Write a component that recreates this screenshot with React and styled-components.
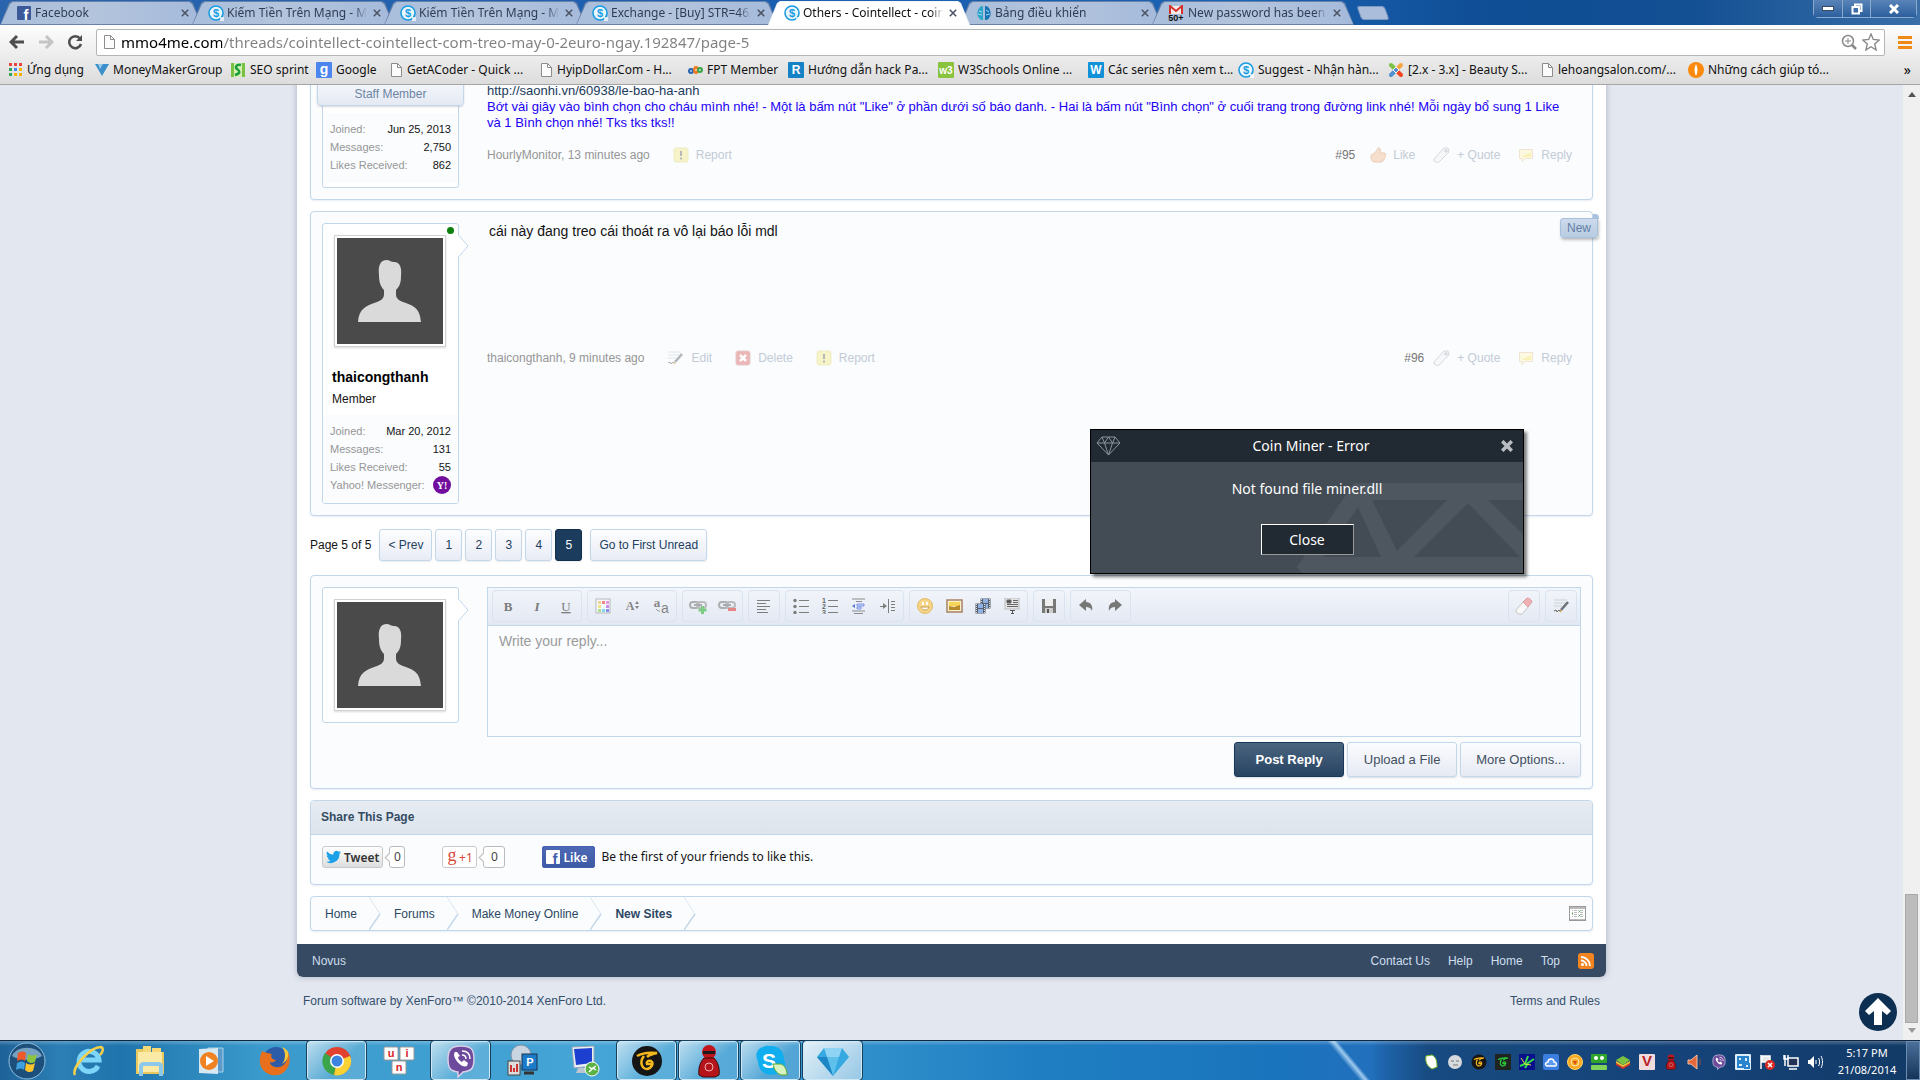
import React from 'react';
import styled, { createGlobalStyle, css } from 'styled-components';

const GlobalStyle = createGlobalStyle`
  * {
    box-sizing: border-box;
  }

  body {
    margin: 0;
    font-family: "Liberation Sans", Arial, sans-serif;
    font-size: 12px;
    line-height: 16px;
    color: #141414;
  }

  a {
    color: inherit;
    text-decoration: none;
  }

  button, input, textarea {
    font-family: inherit;
    margin: 0;
  }

  svg {
    display: block;
    flex-shrink: 0;
  }
`;

const uiFont = '"Noto Sans", "Open Sans", sans-serif';
const blue = '#c3d7ea';

const Desktop = styled.div`
  display: flex;
  flex-direction: column;
  height: 100vh;
  min-height: 600px;
  overflow: hidden;
  position: relative;
`;

/* ---------- browser chrome ---------- */

const TabStrip = styled.div`
  display: flex;
  height: 25px;
  padding-top: 1px;
  background: linear-gradient(90deg, #2a64ad 0, #1b5fb0 40%, #1a62b3 65%, #0f4d94 78%, #124f93 88%, #3a6fa8 100%);
  font-family: ${uiFont};
`;

const Tab = styled.div`
  position: relative;
  z-index: ${props => (props.$active ? 2 : 1)};
  display: flex;
  align-items: center;
  gap: 3px;
  width: 202px;
  margin-right: -10px;
  padding: 0 10px 0 16px;
  isolation: isolate;
  font-size: 12px;
  color: ${props => (props.$active ? '#111' : '#2f3d54')};

  &::before,
  &::after {
    content: '';
    position: absolute;
    z-index: -1;
    inset: 0;
    background: ${props => (props.$active ? '#f4f6f9' : '#6781a8')};
    clip-path: polygon(0 100%, 9px 2px, 12px 0, calc(100% - 12px) 0, calc(100% - 9px) 2px, 100% 100%);
  }

  &::after {
    inset: 1px 1px ${props => (props.$active ? '0' : '1px')};
    background: ${props => (props.$active ? '#fff' : 'linear-gradient(90deg, #a9bedb, #b3c4dc 45%, #a5badb)')};
  }
`;

const TabTitle = styled.a`
  flex: 1;
  min-width: 0;
  overflow: hidden;
  white-space: nowrap;
  mask-image: linear-gradient(90deg, #000 calc(100% - 12px), transparent);
`;

const TabClose = styled.button`
  display: flex;
  padding: 3px;
  border: 0;
  background: none;
  color: #4c5566;
`;

const NewTab = styled.button`
  width: 28px;
  height: 14px;
  margin: 5px 0 0 15px;
  border: 1px solid #7f9ac2;
  border-radius: 3px;
  background: #aabddb;
  transform: skewX(20deg);
`;

const WindowControls = styled.div`
  display: flex;
  height: 18px;
  margin: -1px 3px 0 auto;
  border: 1px solid #8ba9cd;
  border-top: 0;
  border-radius: 0 0 5px 5px;
`;

const WindowButton = styled.button`
  display: flex;
  align-items: center;
  justify-content: center;
  width: ${props => (props.$wide ? 46 : 28)}px;
  border: 0;
  border-left: ${props => (props.$first ? '0' : '1px solid #8ba9cd')};
  background: linear-gradient(#5a84b8, #2b5f9e);
  padding: 0;
`;

const NavBar = styled.div`
  display: flex;
  align-items: center;
  gap: 13px;
  height: 34px;
  padding: 0 8px 0 9px;
  background: linear-gradient(#fdfdfd, #ebebeb);
`;

const ToolButton = styled.button`
  display: flex;
  padding: 0;
  border: 0;
  background: none;
`;

const AddressBox = styled.div`
  flex: 1;
  display: flex;
  align-items: center;
  gap: 5px;
  height: 27px;
  padding: 0 4px 0 6px;
  border: 1px solid #b5b5b5;
  border-radius: 2px;
  background: #fff;
`;

const AddressInput = styled.input`
  flex: 1;
  border: 0;
  outline: 0;
  padding: 0;
  font-family: ${uiFont};
  font-size: 15px;
  color: #808080;
  background: linear-gradient(90deg, #000 101px, #808080 101px);
  background-clip: text;
  -webkit-text-fill-color: transparent;
`;

const BookmarkBar = styled.div`
  display: flex;
  align-items: center;
  height: 26px;
  padding: 0 9px 4px 8px;
  border-bottom: 1px solid #a6a6a6;
  background: linear-gradient(#ebebeb, #dcdcdc);
  font-family: ${uiFont};
  font-size: 12px;
`;

const Bookmark = styled.a`
  display: flex;
  align-items: center;
  gap: 4px;
  width: ${props => props.$width}px;
  white-space: nowrap;
  color: #111;
`;

const More = styled.button`
  margin-left: auto;
  padding: 0;
  border: 0;
  background: none;
  font-size: 14px;
`;

/* ---------- page ---------- */

const Viewport = styled.div`
  flex: 1;
  display: flex;
  min-height: 0;
`;

const Page = styled.main`
  flex: 1;
  position: relative;
  overflow: hidden;
  background: #e3e7f0;
`;

const Container = styled.div`
  max-width: 1309px;
  margin: -15px auto 0;
  border-radius: 0 0 6px 6px;
  background: #fff;
  box-shadow: 0 0 6px rgba(60, 80, 110, 0.35);
`;

const Content = styled.div`
  display: flex;
  flex-direction: column;
  gap: 11px;
  padding: 0 13px 13px;
`;

const Panel = styled.section`
  border: 1px solid ${blue};
  border-radius: 4px;
  background: #fafcfe;
  box-shadow: 0 1px 2px rgba(100, 130, 170, 0.15);
`;

const Post = styled(Panel)`
  display: flex;
  align-items: ${props => (props.$top ? 'flex-start' : 'stretch')};
  gap: 28px;
  padding: 11px;
  position: relative;
`;

const UserCard = styled.aside`
  position: relative;
  width: 137px;
  flex-shrink: 0;
  border: 1px solid ${blue};
  border-radius: 3px;
  background: #fff;
`;

const CardArrow = styled.svg`
  position: absolute;
  top: 11px;
  right: -11px;
`;

const OnlineDot = styled.span`
  position: absolute;
  top: 3px;
  right: 4px;
  width: 7px;
  height: 7px;
  border-radius: 50%;
  background: #0b800b;
`;

const AvatarFrame = styled.a`
  display: block;
  width: 112px;
  margin: 11px;
  padding: 2px;
  border: 1px solid #d2d2d6;
  background: #fff;
  box-shadow: 0 1px 2px rgba(0, 0, 0, 0.15);
`;

const UserText = styled.div`
  padding: 10px 9px 8px;
`;

const UserName = styled.h3`
  margin: 0 0 5px;
  font-size: 14px;
  line-height: 18px;
  color: #000;
`;

const UserStats = styled.dl`
  margin: 0;
  padding: 7px 7px 9px;
  background: #fafcfe;
  font-size: 11px;
`;

const Stat = styled.div`
  display: flex;
  justify-content: space-between;
  align-items: center;
  height: 18px;

  dt {
    color: #969696;
  }

  dd {
    margin: 0;
  }
`;

const StaffBadge = styled.div`
  height: 23px;
  margin: 0 -6px 7px;
  border: 1px solid ${blue};
  border-radius: 0 0 4px 4px;
  background: linear-gradient(#f3f6fb, #e4e9f3);
  box-shadow: 0 1px 2px rgba(0, 0, 0, 0.15);
  text-align: center;
  line-height: 20px;
  color: #6d84a3;
`;

const PostBody = styled.div`
  flex: 1;
  min-width: 0;
  padding-bottom: ${props => (props.$pad ? 25 : 0)}px;
`;

const Signature = styled.div`
  padding: 1px 9px 0 0;
  font-size: 13px;
  color: #1c3b5a;

  p {
    margin: 0;
    color: #2200f5;
  }
`;

const MessageText = styled.div`
  min-height: 111px;
  padding-left: 2px;
  font-size: 14px;
`;

const Meta = styled.div`
  display: flex;
  align-items: center;
  height: 16px;
  margin-top: 16px;
  padding-right: 9px;
  color: #969696;
`;

const Permalink = styled.a`
  margin-left: auto;
  margin-right: ${props => (props.$tight ? -9 : -3)}px;
  color: #777;
`;

const Action = styled.a`
  display: flex;
  align-items: center;
  gap: 7px;
  margin-left: ${props => (props.$far ? 23 : 18)}px;
  color: #c3cbd6;
`;

const NewBadge = styled.strong`
  position: absolute;
  top: 6px;
  right: -6px;
  width: 38px;
  height: 20px;
  border: 1px solid #a9c0dc;
  border-radius: 3px 0 3px 3px;
  background: linear-gradient(#ccdaeb, #b9cce2);
  box-shadow: 1px 2px 3px rgba(0, 0, 0, 0.25);
  text-align: center;
  font-weight: normal;
  line-height: 18px;
  color: #637fa6;

  &::after {
    content: '';
    position: absolute;
    top: -5px;
    right: -2px;
    width: 6px;
    height: 5px;
    border-radius: 0 4px 0 0;
    background: #a9c0dc;
  }
`;

const PageNav = styled.nav`
  display: flex;
  align-items: center;
  gap: 3px;
  margin: 2px 0 3px;
  line-height: 30px;
`;

const NavLabel = styled.span`
  margin-right: 5px;
`;

const PageLink = styled.a`
  min-width: 27px;
  padding: 0 ${props => (props.$wide ? 8 : 6)}px;
  margin-left: ${props => props.$space || 0}px;
  border: 1px solid ${props => (props.$current ? '#12304d' : blue)};
  border-radius: 3px;
  background: ${props => (props.$current ? '#1b3c5c' : 'linear-gradient(#fdfdfe, #e8ecf5)')};
  box-shadow: 0 1px 2px rgba(0, 0, 0, 0.08);
  text-align: center;
  color: ${props => (props.$current ? '#fff' : '#22405e')};
`;

const Editor = styled.div`
  border: 1px solid ${blue};
`;

const EditorToolbar = styled.div`
  display: flex;
  gap: 5px;
  height: 38px;
  padding: 2px 3px 3px 4px;
  border-bottom: 1px solid ${blue};
  background: linear-gradient(#f2f5fa, #e3e8f3);
`;

const ToolGroup = styled.div`
  display: flex;
  gap: 1px;
  padding: 1px;
  margin-left: ${props => (props.$push ? 'auto' : '0')};
  border: 1px solid #d9e4f0;
  border-radius: 4px;
`;

const EditorButton = styled.button`
  display: flex;
  align-items: center;
  justify-content: center;
  width: 28px;
  padding: 0;
  border: 0;
  background: none;
  opacity: ${props => (props.$soft ? 0.65 : 1)};
`;

const ReplyText = styled.textarea`
  display: block;
  width: 100%;
  height: 110px;
  padding: 7px 11px;
  border: 0;
  outline: 0;
  resize: none;
  background: #fafcfe;
  font-size: 14px;
  line-height: 16px;

  &::placeholder {
    color: #9b9b9b;
  }
`;

const ReplyActions = styled.div`
  display: flex;
  justify-content: flex-end;
  gap: 3px;
  margin-top: 5px;
`;

const FormButton = styled.button`
  height: 35px;
  min-width: 110px;
  padding: 0 15px;
  border: 1px solid ${blue};
  border-radius: 3px;
  background: linear-gradient(#fbfcfe, #e6eaf4);
  box-shadow: 0 1px 2px rgba(0, 0, 0, 0.12);
  font-size: 13px;
  color: #43505e;
  ${props => props.$primary && css`
    border-color: #17385a;
    background: linear-gradient(#4a647e, #274463);
    font-weight: bold;
    color: #fff;
  `}
`;

const ShareTitle = styled.h3`
  margin: 0;
  padding: 0 10px;
  border-bottom: 1px solid ${blue};
  border-radius: 3px 3px 0 0;
  background: linear-gradient(#e6ecf2, #dde4ed);
  font-size: 12px;
  line-height: 33px;
  color: #344b63;
`;

const ShareRow = styled.div`
  display: flex;
  align-items: center;
  height: 49px;
  padding: 0 11px 5px;
`;

const ShareButton = styled.button`
  display: flex;
  align-items: center;
  gap: 3px;
  height: 22px;
  padding: 0 3px;
  border: 1px solid #c9c9c9;
  border-radius: 3px;
  font-family: ${uiFont};
  font-size: 12px;
  font-weight: 600;
  ${props => props.$kind === 'tweet' && css`
    background: linear-gradient(#fff, #dedede);
    color: #333;
  `}
  ${props => props.$kind === 'plus' && css`
    gap: 1px;
    width: 35px;
    justify-content: center;
    background: #fff;
    color: #d9483b;
    font-weight: normal;
  `}
  ${props => props.$kind === 'like' && css`
    width: 53px;
    border-color: #4460ae;
    border-radius: 2px;
    background: linear-gradient(#4d69b5, #3f5aa4);
    color: #fff;
  `}
`;

const ShareCount = styled.span`
  position: relative;
  height: 22px;
  min-width: ${props => (props.$wide ? 22 : 16)}px;
  margin: 0 37px 0 6px;
  border: 1px solid #bbb;
  border-radius: 3px;
  background: #fff;
  text-align: center;
  font-family: ${uiFont};
  line-height: 20px;
  color: #444;

  &::before {
    content: '';
    position: absolute;
    left: -4px;
    top: 7px;
    width: 6px;
    height: 6px;
    border: solid #bbb;
    border-width: 0 0 1px 1px;
    background: #fff;
    transform: rotate(45deg);
  }
`;

const LikeText = styled.span`
  margin-left: 6px;
  font-family: ${uiFont};
  font-size: 12px;
`;

const Breadcrumb = styled(Panel).attrs({ as: 'nav' })`
  display: flex;
  align-items: center;
  height: 35px;
  padding: 0 6px 0 14px;
  color: #2c4762;
`;

const Crumb = styled.a`
  display: flex;
  align-items: center;
  gap: 12px;
  margin-right: 13px;
  font-weight: ${props => (props.$current ? 'bold' : 'normal')};
`;

const QuickNav = styled.button`
  margin-left: auto;
  padding: 0;
  border: 0;
  background: none;
`;

const Footer = styled.footer`
  display: flex;
  align-items: center;
  gap: 18px;
  height: 33px;
  padding: 0 12px 0 15px;
  border-radius: 0 0 6px 6px;
  background: #364a63;
  color: #cfdff0;
`;

const FooterChoice = styled.a`
  margin-right: auto;
`;

const Legal = styled.div`
  display: flex;
  justify-content: space-between;
  max-width: 1309px;
  margin: 16px auto 0;
  padding: 0 6px;
  color: #34506c;
`;

const ToTop = styled.a`
  position: absolute;
  right: 5px;
  bottom: 8px;
`;

const ScrollTrack = styled.div`
  display: flex;
  flex-direction: column;
  align-items: center;
  width: 17px;
  padding: 7px 0;
  background: #f0f0f0;
`;

const ScrollGap = styled.div`
  flex: ${props => props.$grow};
`;

const ScrollThumb = styled.div`
  flex: 127;
  width: 13px;
  border: 1px solid #a8a8a8;
  background: #bcbcbc;
`;

/* ---------- dialog ---------- */

const ErrorDialog = styled.div`
  position: absolute;
  z-index: 5;
  top: 429px;
  right: 396px;
  width: 434px;
  height: 145px;
  border: 1px solid #000;
  background: #434c54;
  box-shadow: 3px 3px 3px rgba(0, 0, 0, 0.5);
  color: #fff;
  font-family: ${uiFont};
  font-size: 14px;
  text-align: center;
`;

const DialogHeader = styled.div`
  display: flex;
  align-items: center;
  justify-content: space-between;
  height: 32px;
  padding: 0 10px 0 5px;
  background: #212932;
`;

const DialogText = styled.p`
  position: relative;
  margin: 0;
  padding: 18px 0 26px;
  line-height: 18px;
`;

const DialogButton = styled.button`
  position: relative;
  width: 93px;
  height: 31px;
  border: 1px solid;
  border-color: #fff #999 #999 #fff;
  background: #212932;
  color: #fff;
  font-size: 14px;
`;

const Watermark = styled.svg`
  position: absolute;
  right: 0;
  bottom: 0;
`;

/* ---------- taskbar ---------- */

const Taskbar = styled.div`
  display: flex;
  align-items: center;
  height: 40px;
  border-top: 1px solid #10283f;
  background:
    linear-gradient(rgba(255, 255, 255, 0.25), rgba(255, 255, 255, 0) 12%),
    linear-gradient(50deg, transparent 44%, rgba(190, 225, 250, 0.8) 50%, transparent 54%) 1310px 0 / 80px 40px no-repeat,
    linear-gradient(90deg, #1d6299 0, #2c7fb5 60px, #1f74ad 120px, #3a9acb 260px, #45a5d6 600px, #2f90cb 860px, #1f7ec2 1040px, #1a74bd 1280px, #2270bd 1370px, #1c60a5 1390px, #174a80 1430px, #154278 1700px, #123a66 1920px);
`;

const StartButton = styled.button`
  display: flex;
  margin: 0 13px 0 8px;
  padding: 0;
  border: 0;
  background: none;
`;

const TaskButton = styled.button`
  display: flex;
  align-items: center;
  justify-content: center;
  width: 59px;
  height: 39px;
  margin-right: 3px;
  padding: 0;
  border: 1px solid transparent;
  border-radius: 3px;
  background: none;
  ${props => props.$open && css`
    border-color: #cfe8f5;
    outline: 1px solid #17405f;
    background: linear-gradient(135deg, rgba(255, 255, 255, 0.65), rgba(255, 255, 255, 0.15) 60%);
  `}
  ${props => props.$front && css`
    background: linear-gradient(135deg, rgba(255, 255, 255, 0.85), rgba(255, 255, 255, 0.5));
  `}
`;

const Tray = styled.div`
  display: flex;
  gap: 8px;
  margin: 2px 13px 0 auto;
`;

const Clock = styled.time`
  width: 62px;
  margin-right: 8px;
  text-align: center;
  font-family: ${uiFont};
  font-size: 11px;
  line-height: 17px;
  color: #fff;
`;

const ShowDesktop = styled.button`
  width: 14px;
  height: 39px;
  border: 1px solid #6c8cb0;
  background: linear-gradient(#4a6f9a, #143458);
`;

/* ---------- icons ---------- */

const Svg = ({ size = 16, w, h, box, children, ...rest }) => (
  <svg width={w || size} height={h || size} viewBox={box || `0 0 ${w || size} ${h || size}`} fill="none" aria-hidden="true" {...rest}>
    {children}
  </svg>
);

const letter = { fontFamily: 'Liberation Sans, sans-serif', textAnchor: 'middle', fontWeight: 'bold' };

const CoinIcon = () => (
  <Svg>
    <circle cx="8" cy="8" r="7" fill="#e8f6fd" stroke="#1b9be0" strokeWidth="1.6" />
    <text x="8" y="12" fontSize="11" fill="#1b9be0" {...letter}>$</text>
    <path d="M12 12h4v4h-4z" fill="#fff" opacity=".7" />
  </Svg>
);

const FacebookIcon = () => (
  <Svg>
    <rect x="1" y="1" width="14" height="14" rx="1" fill="#3b5998" />
    <text x="10" y="15" fontSize="15" fill="#fff" {...letter}>f</text>
  </Svg>
);

const BrainIcon = () => (
  <Svg>
    <path d="M7 1C4 1 3 3 2 5c-1 3-1 6 1 8 1 2 3 2 4 2z" fill="#2ba6c9" />
    <path d="M9 1c3 0 4 2 5 4 1 3 1 6-1 8-1 2-3 2-4 2z" fill="#1774b4" />
    <path d="M3 6l3 1M2 9l4 1M10 5l3 2M10 10l4-1" stroke="#a8d8ec" />
  </Svg>
);

const GmailIcon = () => (
  <Svg w={17}>
    <path d="M1 1h14v8H1z" fill="#f7eaea" />
    <path d="M2 9V1l6 5 6-5v8" stroke="#d6322d" strokeWidth="2" />
    <text x="8" y="16" fontSize="9" fill="#111" {...letter}>50+</text>
  </Svg>
);

const FileIcon = () => (
  <Svg w={13} h={16}>
    <path d="M1.500 1.500h6l4 4v9h-10z" fill="#fcfcfc" stroke="#8c8c8c" />
    <path d="M7.500 1.500v4h4" stroke="#8c8c8c" />
  </Svg>
);

const AppsIcon = () => (
  <Svg w={15} h={15}>
    {['#e8453c', '#e8453c', '#e8453c', '#2fa45b', '#4285f4', '#f5b400', '#2fa45b', '#f5b400', '#f5b400'].map((fill, i) => (
      <rect key={i} x={1 + (i % 3) * 5} y={1 + Math.floor(i / 3) * 5} width="3" height="3" fill={fill} />
    ))}
  </Svg>
);

const TriangleIcon = () => (
  <Svg w={14}>
    <path d="M0 2h14L7 14z" fill="#3b8fcb" />
    <path d="M3 2h5l-3 5z" fill="#9ccbe8" />
  </Svg>
);

const SeoIcon = () => (
  <Svg>
    <path d="M1 1h14v14H1z" fill="#d7efb5" />
    <path d="M1 1h3v14H1zM12 1h3v14h-3z" fill="#79c143" />
    <path d="M11 3C6 2 5 5 7 7c3 2 4 4-2 6" stroke="#17a03a" strokeWidth="2.500" />
  </Svg>
);

const LetterTile = ({ fill, text, color = '#fff', fontSize = 12 }) => (
  <Svg>
    <rect width="16" height="16" rx="1" fill={fill} />
    <text x="8" y="12" fontSize={fontSize} fill={color} {...letter}>{text}</text>
  </Svg>
);

const FptIcon = () => (
  <Svg w={15}>
    <ellipse cx="3" cy="9" rx="3" ry="3" fill="#2a66b5" />
    <ellipse cx="8" cy="8" rx="3" ry="4" fill="#ef7a22" />
    <ellipse cx="12" cy="8" rx="3" ry="3" fill="#3ba649" />
    <path d="M2 9h2M7 8h2M11 8h2" stroke="#fff" />
  </Svg>
);

const JoomlaIcon = () => (
  <Svg>
    <path d="M3 3l5 5" stroke="#7ac143" strokeWidth="4" strokeLinecap="round" />
    <path d="M13 3L8 8" stroke="#f9a541" strokeWidth="4" strokeLinecap="round" />
    <path d="M13 13L8 8" stroke="#f44321" strokeWidth="4" strokeLinecap="round" />
    <path d="M3 13l5-5" stroke="#5091cd" strokeWidth="4" strokeLinecap="round" />
    <path d="M5 8l3-3 3 3-3 3z" stroke="#fff" />
  </Svg>
);

const FlameIcon = () => (
  <Svg>
    <circle cx="8" cy="8" r="8" fill="#fb8a0c" />
    <path d="M8 2c2 4 2 8 0 12-2-4-2-8 0-12z" fill="#fff" />
  </Svg>
);

const Cross = ({ size = 8, color = 'currentColor', width = 2 }) => (
  <Svg size={size} box="0 0 10 10">
    <path d="M1 1l8 8M9 1L1 9" stroke={color} strokeWidth={width} />
  </Svg>
);

const Avatar = () => (
  <Svg size={106}>
    <rect width="106" height="106" fill="#4a4a4a" />
    <path d="M21 84C22 71 28 68 40 64c5-2 7-4 7-8v-4c-4-4-5-9-5-15-1-9 1-15 8-15 2 0 4 2 7 2 6 0 8 6 7 14 0 6-1 10-5 14v4c0 4 2 6 7 8 12 4 17 7 18 20z" fill="#dadada" />
  </Svg>
);

const Warning = () => (
  <Svg opacity=".5">
    <rect x="1" y="1" width="14" height="14" rx="2" fill="#f3ec94" stroke="#e3dc8c" />
    <path d="M8 4v5M8 10.500v2" stroke="#777" strokeWidth="2" />
  </Svg>
);

const ThumbIcon = () => (
  <Svg opacity=".75">
    <path d="M1 8c3-1 5-3 7-7 2-1 3 1 2 5h5c1 1 1 2 0 3 1 1 0 2-1 2 1 2 0 2-1 2 0 2-1 2-2 2H4c-2 0-3-2-3-7z" fill="#f6d6bd" stroke="#e6bda0" />
  </Svg>
);

const TagIcon = () => (
  <Svg w={17}>
    <path d="M1 12L11 1l4 0 1 4L6 15c-1 1-2 1-3 0l-2-1z" fill="#f5f7f9" stroke="#d5dade" />
    <circle cx="13" cy="4" r="1.200" stroke="#cbd1d6" />
  </Svg>
);

const BubbleIcon = () => (
  <Svg>
    <path d="M1.500 2.500h13v9H7l-3 3v-3H1.500z" fill="#fdf9e0" stroke="#f0e3d0" />
    <path d="M3 10c3-1 5-4 10-4v4z" fill="#f8f2b8" />
  </Svg>
);

const PencilIcon = ({ faint }) => (
  <Svg w={17} opacity={faint ? 0.5 : 1}>
    <path d="M1 2h13M1 5h11M1 8h8" stroke="#ccd1d6" />
    <path d="M1 13l2-1 1 2 2-2 1 1" stroke="#666" />
    <path d="M15 4l-7 8" stroke="#6a727a" strokeWidth="2.500" />
    <path d="M8 12l-1 2" stroke="#caa25f" strokeWidth="2" />
  </Svg>
);

const DeleteIcon = () => (
  <Svg opacity=".45">
    <rect x="1" y="1" width="14" height="14" rx="2" fill="#d9635e" stroke="#c98a86" />
    <path d="M5 5l6 6M11 5l-6 6" stroke="#fff" strokeWidth="2.500" />
  </Svg>
);

const YahooIcon = () => (
  <Svg size={18}>
    <circle cx="9" cy="9" r="9" fill="#720e9e" />
    <text x="9" y="13" fontSize="10" fill="#fff" {...letter} fontFamily="Liberation Serif, serif">Y!</text>
  </Svg>
);

const Glyph = ({ children, ...rest }) => (
  <Svg>
    <text x="8" y="13" fontSize="13" fill="#7b7b7b" {...letter} fontFamily="Liberation Serif, serif" {...rest}>{children}</text>
  </Svg>
);

const PaletteIcon = () => (
  <Svg>
    <rect x="1" y="1" width="14" height="14" fill="#fff" stroke="#999" />
    {['#f3c56b', '#e8524a', '#e26ad0', '#f0e04f', '#fff', '#b55ce0', '#86d94d', '#4fcbe8', '#4b5ee8'].map((fill, i) => (
      <rect key={i} x={3 + (i % 3) * 4} y={3 + Math.floor(i / 3) * 4} width="3" height="3" fill={fill} />
    ))}
  </Svg>
);

const SizeIcon = () => (
  <Svg>
    <text x="6" y="12" fontSize="12" fill="#858585" {...letter} fontFamily="Liberation Serif, serif">A</text>
    <path d="M11 6l2-3 2 3zM11 8l2 3 2-3z" fill="#858585" />
  </Svg>
);

const FamilyIcon = () => (
  <Svg>
    <text x="4" y="9" fontSize="13" fill="#858585" {...letter} fontFamily="Liberation Serif, serif">a</text>
    <text x="12" y="15" fontSize="14" fill="#858585" {...letter} fontWeight="normal">a</text>
    <path d="M3 11l2 2h2" stroke="#999" />
  </Svg>
);

const LinkIcon = ({ remove }) => (
  <Svg w={18}>
    <rect x="1" y="4" width="9" height="6" rx="3" stroke="#8c8c8c" strokeWidth="2" />
    <rect x="8" y="4" width="9" height="6" rx="3" stroke="#a0a0a0" strokeWidth="2" />
    <path d="M5 7h8" stroke="#888" strokeWidth="2" />
    {remove
      ? <rect x="10" y="10" width="8" height="3" fill="#e2504a" />
      : <path d="M13.500 8v8M9.500 12h8" stroke="#46b94a" strokeWidth="3" />}
  </Svg>
);

const AlignIcon = () => (
  <Svg>
    <path d="M1 2.500h13M1 5.500h9M1 8.500h13M1 11.500h9M1 14.500h11" stroke="#7d7d7d" />
  </Svg>
);

const ListIcon = ({ numbered }) => (
  <Svg>
    <path d="M6 2.500h10M6 8.500h10M6 14.500h10" stroke="#7d7d7d" />
    {numbered
      ? ['1', '2', '3'].map((n, i) => <text key={n} x="2" y={5 + i * 6} fontSize="7" fill="#666" {...letter}>{n}</text>)
      : [2.5, 8.5, 14.5].map(y => <circle key={y} cx="2" cy={y} r="1.700" fill="#7d7d7d" />)}
  </Svg>
);

const OutdentIcon = () => (
  <Svg>
    <path d="M1 1h13M5 3.500h6M1 13h13M3 15.500h9" stroke="#8b8b8b" />
    <path d="M6 6h7v2H6zM6 9h4v2H6z" fill="#d6e0ff" stroke="#7b93e6" />
    <path d="M1 8l3-2v4z" fill="#5c77dd" />
  </Svg>
);

const IndentIcon = () => (
  <Svg>
    <path d="M8.500 1v14M11 3.500h4M11 6.500h4M11 9.500h4M11 12.500h4M0 8.500h4" stroke="#7d7d7d" />
    <path d="M3 5l4 3-4 3z" fill="#7d7d7d" />
  </Svg>
);

const SmileIcon = () => (
  <Svg w={17}>
    <circle cx="8" cy="8" r="7.500" fill="#f6d488" stroke="#e2bb62" />
    <path d="M6 4v3M10 4v3" stroke="#fff" strokeWidth="2" />
    <path d="M4 9c1 4 7 4 8 0z" fill="#fff" stroke="#c79c4c" />
  </Svg>
);

const ImageIcon = () => (
  <Svg w={17}>
    <rect x="1" y="2" width="15" height="12" fill="#fbf0cf" stroke="#a78166" strokeWidth="1.500" />
    <path d="M3 4h11v4H3z" fill="#f5d657" />
    <path d="M3 8l5 1 6-2v5H3z" fill="#b78b2c" />
  </Svg>
);

const MediaIcon = () => (
  <Svg>
    {[[5, 0], [0, 5]].map(([x, y]) => (
      <g key={x}>
        <rect x={x + 0.5} y={y + 0.5} width="10" height="10" fill="#555f6b" />
        <path d={`M${x + 3} ${y + 1}h5v4H${x + 3}zM${x + 3} ${y + 6}h5v4H${x + 3}z`} fill="#8fb0e2" />
        <path d={`M${x + 1.5} ${y + 1}v10M${x + 9.5} ${y + 1}v10`} stroke="#ddd" strokeDasharray="1 1" />
      </g>
    ))}
  </Svg>
);

const QuoteIcon = () => (
  <Svg>
    <rect x="1" y="0" width="14" height="11" fill="#e6e6e6" stroke="#bbb" />
    <path d="M3 2h4v3H3zM9 2.500h5M9 4.500h5M3 6.500h11M3 8.500h11" fill="#555" stroke="#666" />
    <path d="M6 12.500h5M8.500 12v3M7 15.500h3" stroke="#555" />
  </Svg>
);

const SaveIcon = () => (
  <Svg>
    <path d="M1 1h14v14H1z" fill="#787878" />
    <path d="M4 1h8v7H4z" fill="#efefef" />
    <path d="M4 10h8v5H4z" fill="#ccc" />
    <path d="M6 11h2v4H6z" fill="#555" />
  </Svg>
);

const UndoIcon = ({ flip }) => (
  <Svg>
    <path transform={flip ? 'translate(16 0) scale(-1 1)' : undefined} d="M1 7l7-6v3c5 0 7 4 6 9-1-3-3-4-6-4v4z" fill="#777" />
  </Svg>
);

const EraserIcon = () => (
  <Svg size={18}>
    <path d="M1 13L9 4l5 5-7 8c-2 1-7-1-6-4z" fill="#f9f9f9" stroke="#c4c4c4" />
    <path d="M8 5l4-4c2 0 5 2 5 4l-4 5z" fill="#f0b1b4" stroke="#dba2a5" />
  </Svg>
);

const TwitterIcon = () => (
  <Svg w={15} h={14} box="0 0 24 20">
    <path d="M24 2.400a10 10 0 0 1-2.800.8A5 5 0 0 0 23.300.5a10 10 0 0 1-3.100 1.200A5 5 0 0 0 11.800 6.200 14 14 0 0 1 1.700 1.100a5 5 0 0 0 1.500 6.600A5 5 0 0 1 1 7.100a5 5 0 0 0 3.900 4.900 5 5 0 0 1-2.200.1 5 5 0 0 0 4.600 3.400A10 10 0 0 1 0 17.500 14 14 0 0 0 21.500 5a10 10 0 0 0 2.500-2.600z" fill="#1ba1e8" />
  </Svg>
);

const CrumbArrow = () => (
  <Svg w={12} h={33}>
    <path d="M0 0l11 17" stroke="#dbe6f2" />
    <path d="M11 17L0 33" stroke="#c3d7ea" strokeWidth="1.500" />
  </Svg>
);

const GridIcon = () => (
  <Svg w={17} h={15}>
    <rect x=".5" y=".5" width="16" height="14" fill="#fff" stroke="#999" />
    <path d="M1 1h15v2H1zM1 13h15v1H1z" fill="#bbb" />
    <path d="M3 4.500h11M3 6.500h11M3 8.500h11M3 10.500h11" stroke="#bbb" strokeDasharray="1 1 3 1" />
    <path d="M8.500 3v10" stroke="#fff" />
    <path d="M3 7.500h1M10 5.500h1M10 9.500h1" stroke="#4a4" />
  </Svg>
);

const RssIcon = () => (
  <Svg>
    <rect width="16" height="16" rx="3" fill="#f48420" />
    <circle cx="4.500" cy="11.500" r="1.500" fill="#fff" />
    <path d="M3 7.500a5.500 5.500 0 0 1 5.500 5.500M3 4a9 9 0 0 1 9 9" stroke="#fff" strokeWidth="1.800" />
  </Svg>
);

const DiamondOutline = () => (
  <Svg w={25} h={20}>
    <path d="M6 1h13l5 6-11.500 12L1 7zM1 7h23M6 1l2.500 6 4 12 4-12L19 1M8.500 7l4-6 4 6" stroke="#8b949c" />
  </Svg>
);

const toolGroups = [
  [['Bold', <Glyph>B</Glyph>], ['Italic', <Glyph fontStyle="italic">I</Glyph>], ['Underline', <Glyph textDecoration="underline" fontWeight="normal">U</Glyph>]],
  [['Text colour', <PaletteIcon />, true], ['Font size', <SizeIcon />], ['Font family', <FamilyIcon />]],
  [['Link', <LinkIcon />, true], ['Unlink', <LinkIcon remove />, true]],
  [['Alignment', <AlignIcon />]],
  [['Unordered list', <ListIcon />], ['Ordered list', <ListIcon numbered />], ['Outdent', <OutdentIcon />], ['Indent', <IndentIcon />]],
  [['Smilies', <SmileIcon />], ['Image', <ImageIcon />], ['Media', <MediaIcon />], ['Quote', <QuoteIcon />]],
  [['Drafts', <SaveIcon />]],
  [['Undo', <UndoIcon />], ['Redo', <UndoIcon flip />]],
];

const tabs = [
  { title: 'Facebook', icon: <FacebookIcon /> },
  { title: 'Kiếm Tiền Trên Mạng - M', icon: <CoinIcon /> },
  { title: 'Kiếm Tiền Trên Mạng - M', icon: <CoinIcon /> },
  { title: 'Exchange - [Buy] STR=46/', icon: <CoinIcon /> },
  { title: 'Others - Cointellect - coin', icon: <CoinIcon />, active: true },
  { title: 'Bảng điều khiển', icon: <BrainIcon /> },
  { title: 'New password has been g', icon: <GmailIcon /> },
];

const bookmarks = [
  ['Ứng dụng', 87, <AppsIcon />],
  ['MoneyMakerGroup', 135, <TriangleIcon />],
  ['SEO sprint', 86, <SeoIcon />],
  ['Google', 74, <LetterTile fill="#4a86ee" text="g" fontSize={14} />],
  ['GetACoder - Quick ...', 150, <FileIcon />],
  ['HyipDollar.Com - H...', 148, <FileIcon />],
  ['FPT Member', 100, <FptIcon />],
  ['Hướng dẫn hack Pa...', 150, <LetterTile fill="#1582c5" text="R" />],
  ['W3Schools Online ...', 150, <LetterTile fill="#8ac33e" text="w3" fontSize={10} />],
  ['Các series nên xem t...', 150, <LetterTile fill="#1192d8" text="W" />],
  ['Suggest - Nhận hàn...', 150, <CoinIcon />],
  ['[2.x - 3.x] - Beauty S...', 153, <JoomlaIcon />],
  ['lehoangsalon.com/...', 147, <FileIcon />],
  ['Những cách giúp tó...', 150, <FlameIcon />],
];

function BrowserChrome() {
  return (
    <header>
      <TabStrip>
        {tabs.map((tab, i) => (
          <Tab key={i} $active={tab.active}>
            {tab.icon}
            <TabTitle href="#">{tab.title}</TabTitle>
            <TabClose aria-label="Close tab"><Cross /></TabClose>
          </Tab>
        ))}
        <NewTab aria-label="New tab" />
        <WindowControls>
          <WindowButton $first aria-label="Minimize">
            <Svg w={12} h={5}><rect x=".5" y=".5" width="11" height="4" fill="#fff" stroke="#3a4a60" /></Svg>
          </WindowButton>
          <WindowButton aria-label="Restore">
            <Svg size={12}><path d="M4 3V1.500h6.500V8H9M1.500 4h6.500v6.500H1.500z" stroke="#fff" strokeWidth="2" /></Svg>
          </WindowButton>
          <WindowButton $wide aria-label="Close"><Cross size={10} color="#fff" width={3} /></WindowButton>
        </WindowControls>
      </TabStrip>
      <NavBar>
        <ToolButton aria-label="Back">
          <Svg><path d="M15 8H3M8 2L2 8l6 6" stroke="#4e4e4e" strokeWidth="3" /></Svg>
        </ToolButton>
        <ToolButton aria-label="Forward">
          <Svg><path d="M1 8h12M8 2l6 6-6 6" stroke="#c4c4c4" strokeWidth="3" /></Svg>
        </ToolButton>
        <ToolButton aria-label="Reload">
          <Svg>
            <path d="M13 4.500A6 6 0 1 0 14 10" stroke="#4e4e4e" strokeWidth="2.500" />
            <path d="M15 1v6H9z" fill="#4e4e4e" />
          </Svg>
        </ToolButton>
        <AddressBox>
          <FileIcon />
          <AddressInput aria-label="Address" defaultValue="mmo4me.com/threads/cointellect-cointellect-com-treo-may-0-2euro-ngay.192847/page-5" />
          <ToolButton aria-label="Zoom">
            <Svg>
              <circle cx="7" cy="7" r="5.500" stroke="#888" strokeWidth="1.500" />
              <path d="M11 11l4 4" stroke="#888" strokeWidth="2.500" />
              <path d="M7 4v6M4 7h6" stroke="#888" />
            </Svg>
          </ToolButton>
          <ToolButton aria-label="Bookmark this page">
            <Svg size={18}><path d="M9 1l2.300 5.500 6 .5-4.600 4 1.400 6L9 13.800 3.900 17l1.400-6L.7 7l6-.5z" fill="#fff" stroke="#858585" strokeWidth="1.300" /></Svg>
          </ToolButton>
        </AddressBox>
        <ToolButton aria-label="Menu">
          <Svg w={14}><path d="M0 3.500h14M0 8.500h14M0 13.500h14" stroke="#f08a16" strokeWidth="3" /></Svg>
        </ToolButton>
      </NavBar>
      <BookmarkBar>
        {bookmarks.map(([title, width, icon]) => (
          <Bookmark key={title} href="#" $width={width}>{icon}{title}</Bookmark>
        ))}
        <More aria-label="More bookmarks">»</More>
      </BookmarkBar>
    </header>
  );
}

const Arrow = () => (
  <CardArrow width="11" height="22" viewBox="0 0 11 22" aria-hidden="true">
    <path d="M0 0l10 11L0 22z" fill="#fff" />
    <path d="M.5 0l9.500 11L.5 22" fill="none" stroke={blue} />
  </CardArrow>
);

const StatList = ({ rows }) => (
  <UserStats>
    {rows.map(([label, value]) => (
      <Stat key={label}>
        <dt>{label}</dt>
        <dd>{value}</dd>
      </Stat>
    ))}
  </UserStats>
);

const MetaRight = ({ number, like }) => (
  <>
    <Permalink href="#" $tight={!like}>{number}</Permalink>
    {like && <Action href="#"><ThumbIcon />Like</Action>}
    <Action href="#"><TagIcon />+ Quote</Action>
    <Action href="#"><BubbleIcon />Reply</Action>
  </>
);

function Thread() {
  return (
    <>
      <Post as="article">
        <UserCard>
          <StaffBadge>Staff Member</StaffBadge>
          <StatList rows={[['Joined:', 'Jun 25, 2013'], ['Messages:', '2,750'], ['Likes Received:', '862']]} />
        </UserCard>
        <PostBody $pad>
          <Signature>
            <a href="#">http://saonhi.vn/60938/le-bao-ha-anh</a>
            <p>
              Bớt vài giây vào bình chọn cho cháu mình nhé! - Một là bấm nút "Like" ở phần dưới số báo danh. - Hai là bấm nút "Bình chọn" ở cuối trang trong đường link nhé! Mỗi ngày bổ sung 1 Like
              {' '}và 1 Bình chọn nhé! Tks tks tks!!
            </p>
          </Signature>
          <Meta>
            <span>HourlyMonitor, 13 minutes ago</span>
            <Action href="#" $far><Warning />Report</Action>
            <MetaRight number="#95" like />
          </Meta>
        </PostBody>
      </Post>

      <Post as="article">
        <UserCard>
          <Arrow />
          <OnlineDot />
          <AvatarFrame href="#" aria-label="thaicongthanh"><Avatar /></AvatarFrame>
          <UserText>
            <UserName>thaicongthanh</UserName>
            Member
          </UserText>
          <StatList
            rows={[
              ['Joined:', 'Mar 20, 2012'],
              ['Messages:', '131'],
              ['Likes Received:', '55'],
              ['Yahoo! Messenger:', <YahooIcon key="y" />],
            ]}
          />
        </UserCard>
        <PostBody>
          <MessageText>cái này đang treo cái thoát ra vô lại báo lỗi mdl</MessageText>
          <Meta>
            <span>thaicongthanh, 9 minutes ago</span>
            <Action href="#" $far><PencilIcon faint />Edit</Action>
            <Action href="#" $far><DeleteIcon />Delete</Action>
            <Action href="#" $far><Warning />Report</Action>
            <MetaRight number="#96" />
          </Meta>
        </PostBody>
        <NewBadge>New</NewBadge>
      </Post>
    </>
  );
}

function ReplyForm() {
  return (
    <Post $top>
      <UserCard>
        <Arrow />
        <AvatarFrame href="#" aria-label="Your avatar"><Avatar /></AvatarFrame>
      </UserCard>
      <PostBody>
        <Editor>
          <EditorToolbar>
            {toolGroups.map((group, i) => (
              <ToolGroup key={i}>
                {group.map(([label, icon, soft]) => (
                  <EditorButton key={label} aria-label={label} $soft={soft}>{icon}</EditorButton>
                ))}
              </ToolGroup>
            ))}
            <ToolGroup $push>
              <EditorButton aria-label="Remove formatting"><EraserIcon /></EditorButton>
            </ToolGroup>
            <ToolGroup>
              <EditorButton aria-label="Toggle editor"><PencilIcon /></EditorButton>
            </ToolGroup>
          </EditorToolbar>
          <ReplyText aria-label="Reply" placeholder="Write your reply..." />
        </Editor>
        <ReplyActions>
          <FormButton $primary>Post Reply</FormButton>
          <FormButton>Upload a File</FormButton>
          <FormButton>More Options...</FormButton>
        </ReplyActions>
      </PostBody>
    </Post>
  );
}

function SharePanel() {
  return (
    <Panel>
      <ShareTitle>Share This Page</ShareTitle>
      <ShareRow>
        <ShareButton $kind="tweet"><TwitterIcon />Tweet</ShareButton>
        <ShareCount>0</ShareCount>
        <ShareButton $kind="plus">
          <Svg w={11} h={18}><text x="5" y="13" fontSize="18" fill="#d9483b" {...letter} fontWeight="normal" fontFamily="Liberation Serif, serif">g</text></Svg>
          +1
        </ShareButton>
        <ShareCount $wide>0</ShareCount>
        <ShareButton $kind="like">
          <Svg size={14}>
            <rect width="14" height="14" rx="1" fill="#fff" />
            <text x="9" y="14" fontSize="15" fill="#4460ae" {...letter}>f</text>
          </Svg>
          Like
        </ShareButton>
        <LikeText>Be the first of your friends to like this.</LikeText>
      </ShareRow>
    </Panel>
  );
}

/* ---------- taskbar icons ---------- */

const StartOrb = () => (
  <Svg size={38}>
    <circle cx="19" cy="19" r="18" fill="#1d4f7c" stroke="#8fc0e0" />
    <path d="M4 14C8 3 30 3 34 14c-8 5-22 5-30 0z" fill="#9cc4dd" opacity=".7" />
    <path d="M10 11c3-2 6-2 8 0l-1 8c-2-2-5-2-8 0z" fill="#ee5a29" />
    <path d="M20 12c3 2 6 2 9 0l-2 8c-3 2-6 1-8-1z" fill="#8cc63f" />
    <path d="M9 21c3-2 6-2 8 0l-1 7c-2-2-5-2-8 0z" fill="#3fa0e0" />
    <path d="M18 21c3 2 6 2 9 0l-2 8c-3 2-6 1-8-1z" fill="#fdc52c" />
  </Svg>
);

const IeIcon = () => (
  <Svg size={34}>
    <path d="M26 22a10 10 0 1 1 1-6H10" stroke="#7dd6fa" strokeWidth="5" />
    <path d="M3 31C-1 24 18 3 29 3c3 1 2 5-1 8" stroke="#f6cf4a" strokeWidth="2.500" />
  </Svg>
);

const ExplorerIcon = () => (
  <Svg size={34}>
    <path d="M2 5h11l2 3h15v22H2z" fill="#e9c85f" />
    <path d="M4 8h24v20H4z" fill="#fbeaa6" />
    <path d="M9 2h8v6H9zM18 4h9v4h-9z" fill="#f7d877" />
    <path d="M7 32v-9c0-2 1-3 3-3h14c2 0 3 1 3 3v9" stroke="#8cc8ea" strokeWidth="4" />
  </Svg>
);

const PlayerIcon = () => (
  <Svg size={30}>
    <path d="M10 2h15v24H10z" fill="#5c9bc9" stroke="#a9d3ec" />
    <path d="M1 3l19-1v26L1 27z" fill="#d6e8f2" />
    <circle cx="11" cy="15" r="9" fill="#f08221" />
    <path d="M8 10l8 5-8 5z" fill="#fff" />
  </Svg>
);

const FirefoxIcon = () => (
  <Svg size={32}>
    <circle cx="17" cy="15" r="13" fill="#2c5ca8" />
    <path d="M3 6c-3 7-3 14 1 19 6 7 18 7 23 0 4-5 5-12 2-18 0 8-3 14-9 15-5 1-9-2-9-5 2 1 5 0 6-2-4 0-6-4-4-6-3-1-6-1-10-3z" fill="#e8701c" />
    <path d="M29 7c-1-2-3-4-6-5 4 5 4 12 0 17 5-3 7-7 6-12z" fill="#f9c637" />
  </Svg>
);

const ChromeIcon = () => (
  <Svg size={32}>
    <circle cx="16" cy="16" r="14" fill="#e2412f" />
    <path d="M16 16L4 8a14 14 0 0 0 9 22z" fill="#3ba54c" />
    <path d="M16 16l13-5a14 14 0 0 1-16 19z" fill="#fbd233" />
    <circle cx="16" cy="16" r="7" fill="#fff" />
    <circle cx="16" cy="16" r="5.500" fill="#3c84e0" />
  </Svg>
);

const KeysIcon = () => (
  <Svg w={32} h={30}>
    {[['u', 1, 1], ['i', 17, 1], ['n', 9, 15]].map(([t, x, y]) => (
      <g key={t}>
        <rect x={x} y={y} width="14" height="13" rx="1" fill="#fff" stroke="#999" />
        <text x={x + 7} y={y + 10} fontSize="11" fill="#d8232a" {...letter}>{t}</text>
      </g>
    ))}
  </Svg>
);

const ViberIcon = ({ size = 34 }) => (
  <Svg size={size} box="0 0 34 34">
    <path d="M17 2c10 0 13 3 13 13s-3 12-11 13l-5 5v-5C6 27 4 24 4 15S7 2 17 2z" fill="#6d4a9c" stroke="#d9cfe8" strokeWidth="1.500" />
    <path d="M18 7c5 0 8 3 8 8M18 11c3 0 4 2 4 4" stroke="#fff" strokeWidth="1.500" />
    <path d="M11 8c-4 4 6 17 12 14l1-3-4-3-2 2c-2-1-4-3-4-5l2-1-3-4z" fill="#fff" />
  </Svg>
);

const ControlIcon = () => (
  <Svg size={34}>
    <circle cx="15" cy="11" r="10" fill="#c9d6e2" stroke="#8193a6" />
    <rect x="16" y="10" width="15" height="16" fill="#1c7bc8" stroke="#1b3550" />
    <text x="24" y="22" fontSize="11" fill="#fff" {...letter}>P</text>
    <rect x="2" y="17" width="12" height="14" fill="#ddd" stroke="#444" />
    <path d="M5 28v-7M8 28v-4M11 28v-8" stroke="#c33" strokeWidth="2" />
    <path d="M18 29h10" stroke="#333" strokeWidth="3" />
  </Svg>
);

const RemoteIcon = () => (
  <Svg size={34}>
    <path d="M4 3l22-1v20L6 24z" fill="#e8eef4" stroke="#98a7b5" />
    <path d="M6 5l18-1v15L8 21z" fill="#1d3fd0" />
    <path d="M10 24h8l2 5H8z" fill="#bcc6d0" />
    <circle cx="24" cy="25" r="7" fill="#5bb346" stroke="#fff" />
    <path d="M21 23l3 2-3 3M28 22l-3 2 3 2" stroke="#fff" strokeWidth="1.500" />
  </Svg>
);

const GarenaIcon = ({ size = 32, bg = '#151515', color = '#f5b81c', square }) => (
  <Svg size={size} box="0 0 32 32">
    {square ? <rect width="32" height="32" fill={bg} /> : <circle cx="16" cy="16" r="15" fill={bg} />}
    <path d="M6 11c5-3 11-4 20-3-5 1-8 2-10 4M13 11c-5 6-2 13 3 13 5-1 7-6 4-8-3-1-5 1-4 3h4" stroke={color} strokeWidth="2.500" />
  </Svg>
);

const HoodIcon = ({ size = 34 }) => (
  <Svg size={size} box="0 0 34 34">
    <circle cx="17" cy="8" r="7" fill="#c3161c" />
    <path d="M11 7h12v3H11z" fill="#1b1b1b" />
    <path d="M12 14h10c4 4 6 11 5 17l-4 2H11l-4-2c-1-6 1-13 5-17z" fill="#b5151a" stroke="#3a0a0a" />
    <circle cx="17" cy="23" r="4" stroke="#f0b0b0" />
  </Svg>
);

const SkypeIcon = () => (
  <Svg size={34}>
    <path d="M9 3c4-2 5-1 8-1 8 0 13 5 13 14 3 4 1 15-8 14C11 33 4 26 4 17 1 12 2 5 9 3z" fill="#10aeef" />
    <text x="15" y="24" fontSize="21" fill="#fff" {...letter}>S</text>
    <path d="M19 20h8c3 1 6 5 6 11h-6c-5-2-7-6-8-11z" fill="#d7f3c0" stroke="#5ba52c" />
  </Svg>
);

const DiamondIcon = () => (
  <Svg size={34}>
    <path d="M8 4h18l7 9-16 19L1 13z" fill="#36a9e1" />
    <path d="M8 4l3 9h12l3-9z" fill="#8fd4f4" />
    <path d="M11 13h12l-6 19z" fill="#5fc0ec" />
    <path d="M1 13h10l6 19z" fill="#1e86c4" />
  </Svg>
);

const taskButtons = [
  ['Internet Explorer', <IeIcon />],
  ['Explorer', <ExplorerIcon />],
  ['Media Player', <PlayerIcon />],
  ['Firefox', <FirefoxIcon />],
  ['Chrome', <ChromeIcon />, true],
  ['UniKey', <KeysIcon />],
  ['Viber', <ViberIcon />, true],
  ['Control', <ControlIcon />],
  ['Remote Desktop', <RemoteIcon />],
  ['Garena', <GarenaIcon />, true],
  ['Talk', <HoodIcon />, true],
  ['Skype', <SkypeIcon />, true],
  ['Coin Miner', <DiamondIcon />, true, true],
];

const trayIcons = [
  <Svg><path d="M3 2l6-1c4 2 5 6 5 12l-5 2C4 12 2 8 3 2z" fill="#fff" stroke="#76b82a" /></Svg>,
  <Svg><circle cx="8" cy="8" r="7" fill="#d7dade" /><path d="M4 7h3M9 7h3M6 11h5" stroke="#777" /></Svg>,
  <GarenaIcon size={16} />,
  <GarenaIcon size={16} square bg="#202420" color="#28d03c" />,
  <Svg><rect width="16" height="16" fill="#0a0f8a" /><path d="M1 12l5-2 3-8M6 14l3-5 6-4" stroke="#35e048" strokeWidth="2" /><path d="M2 4l4 6 6 1" stroke="#f0e040" /></Svg>,
  <Svg><rect width="16" height="16" rx="2" fill="#3d7fe0" /><path d="M4 12c-3-1-1-4 1-4 0-4 6-4 6 0 3 0 3 4 1 4z" fill="#5c9af0" stroke="#fff" strokeWidth="1.500" /></Svg>,
  <Svg><circle cx="8" cy="8" r="7.500" fill="#f9a825" stroke="#ffd766" /><circle cx="8" cy="8" r="4" stroke="#fde9a8" /><path d="M6 7h4l-2 4z" fill="#d84e1b" /></Svg>,
  <Svg><rect width="16" height="9" rx="1" fill="#2fa52c" /><circle cx="5" cy="4" r="2" fill="#fff" /><circle cx="11" cy="4" r="2" fill="#fff" /><rect y="11" width="16" height="5" rx="1" fill="#7fd35b" /></Svg>,
  <Svg><path d="M1 9l7 4 7-4v2l-7 4-7-4z" fill="#d8322a" /><path d="M1 7l7 4 7-4v2l-7 4-7-4z" fill="#f4c430" /><path d="M1 6l7-4 7 4-7 5z" fill="#7cc13f" /></Svg>,
  <LetterTile fill="#f0dcdc" text="V" color="#b8242a" fontSize={15} />,
  <HoodIcon size={16} />,
  <Svg><path d="M1 6h3l6-5v14l-6-5H1z" fill="#e4683b" stroke="#f7c0a0" /><path d="M13 5v6" stroke="#8a4f3c" /></Svg>,
  <ViberIcon size={16} />,
  <Svg><rect width="16" height="16" rx="1" fill="#dcecf8" /><path d="M3 3h4v4H3zM9 3h4v5H9zM3 9h5v4H3zM10 10h4v4h-4z" stroke="#2683cc" strokeWidth="2" /></Svg>,
  <Svg><path d="M2 15V1M3 2h8v6H3z" stroke="#fff" strokeWidth="1.500" fill="#e8e8e8" /><circle cx="11" cy="11" r="5" fill="#da2c24" /><path d="M9 9l4 4M13 9l-4 4" stroke="#fff" strokeWidth="1.500" /></Svg>,
  <Svg><rect x="5" y="4" width="10" height="8" fill="#235" stroke="#fff" strokeWidth="1.500" /><path d="M6 15h8M2 1v6M5 1v4H1V1M2 7v5" stroke="#fff" strokeWidth="1.500" /></Svg>,
  <Svg><path d="M1 6h2l4-4v12l-4-4H1z" fill="#fff" /><path d="M9 6v4M11.500 4c1.500 2 1.500 6 0 8M14 2c2 4 2 8 0 12" stroke="#fff" /></Svg>,
];

function App() {
  return (
    <Desktop>
      <GlobalStyle />
      <BrowserChrome />
      <Viewport>
        <Page>
          <Container>
            <Content>
              <Thread />
              <PageNav>
                <NavLabel>Page 5 of 5</NavLabel>
                <PageLink href="#" $wide>&lt; Prev</PageLink>
                {[1, 2, 3, 4, 5].map(n => (
                  <PageLink key={n} href="#" $current={n === 5}>{n}</PageLink>
                ))}
                <PageLink href="#" $wide $space={5}>Go to First Unread</PageLink>
              </PageNav>
              <ReplyForm />
              <SharePanel />
              <Breadcrumb>
                <Crumb href="#">Home<CrumbArrow /></Crumb>
                <Crumb href="#">Forums<CrumbArrow /></Crumb>
                <Crumb href="#">Make Money Online<CrumbArrow /></Crumb>
                <Crumb href="#" $current>New Sites<CrumbArrow /></Crumb>
                <QuickNav aria-label="Open quick navigation"><GridIcon /></QuickNav>
              </Breadcrumb>
            </Content>
            <Footer>
              <FooterChoice href="#">Novus</FooterChoice>
              <a href="#">Contact Us</a>
              <a href="#">Help</a>
              <a href="#">Home</a>
              <a href="#">Top</a>
              <a href="#" aria-label="RSS"><RssIcon /></a>
            </Footer>
          </Container>
          <Legal>
            <a href="#">Forum software by XenForo™ ©2010-2014 XenForo Ltd.</a>
            <a href="#">Terms and Rules</a>
          </Legal>
          <ToTop href="#" aria-label="Back to top">
            <Svg size={40}>
              <circle cx="20" cy="20" r="19" fill="#0d2f52" />
              <path d="M20 6L7 19l4 4 5-4v14h8V19l5 4 4-4z" fill="#fff" />
            </Svg>
          </ToTop>
        </Page>
        <ScrollTrack>
          <Svg w={8} h={5}><path d="M0 5l4-5 4 5z" fill="#555" /></Svg>
          <ScrollGap $grow={799} />
          <ScrollThumb />
          <ScrollGap $grow={5} />
          <Svg w={8} h={5}><path d="M0 0l4 5 4-5z" fill="#999" /></Svg>
        </ScrollTrack>
      </Viewport>

      <ErrorDialog role="alertdialog" aria-label="Coin Miner - Error">
        <DialogHeader>
          <DiamondOutline />
          <span>Coin Miner - Error</span>
          <ToolButton aria-label="Close dialog"><Cross size={12} color="#b9bdc1" width={3} /></ToolButton>
        </DialogHeader>
        <Watermark width="226" height="90" viewBox="0 0 226 90">
          <path d="M57 0H226V90H5L0 84z" fill="#4e575f" />
          <path d="M61 24L84 74H26zM75 17H150L100 68zM171 20L223 74H117zM191 17H226V51z" fill="#434c54" />
        </Watermark>
        <DialogText>Not found file miner.dll</DialogText>
        <DialogButton>Close</DialogButton>
      </ErrorDialog>

      <Taskbar>
        <StartButton aria-label="Start"><StartOrb /></StartButton>
        {taskButtons.map(([label, icon, open, front]) => (
          <TaskButton key={label} aria-label={label} $open={open} $front={front}>{icon}</TaskButton>
        ))}
        <Tray>
          {trayIcons.map((icon, i) => <React.Fragment key={i}>{icon}</React.Fragment>)}
        </Tray>
        <Clock>5:17 PM<br />21/08/2014</Clock>
        <ShowDesktop aria-label="Show desktop" />
      </Taskbar>
    </Desktop>
  );
}

export default App;
